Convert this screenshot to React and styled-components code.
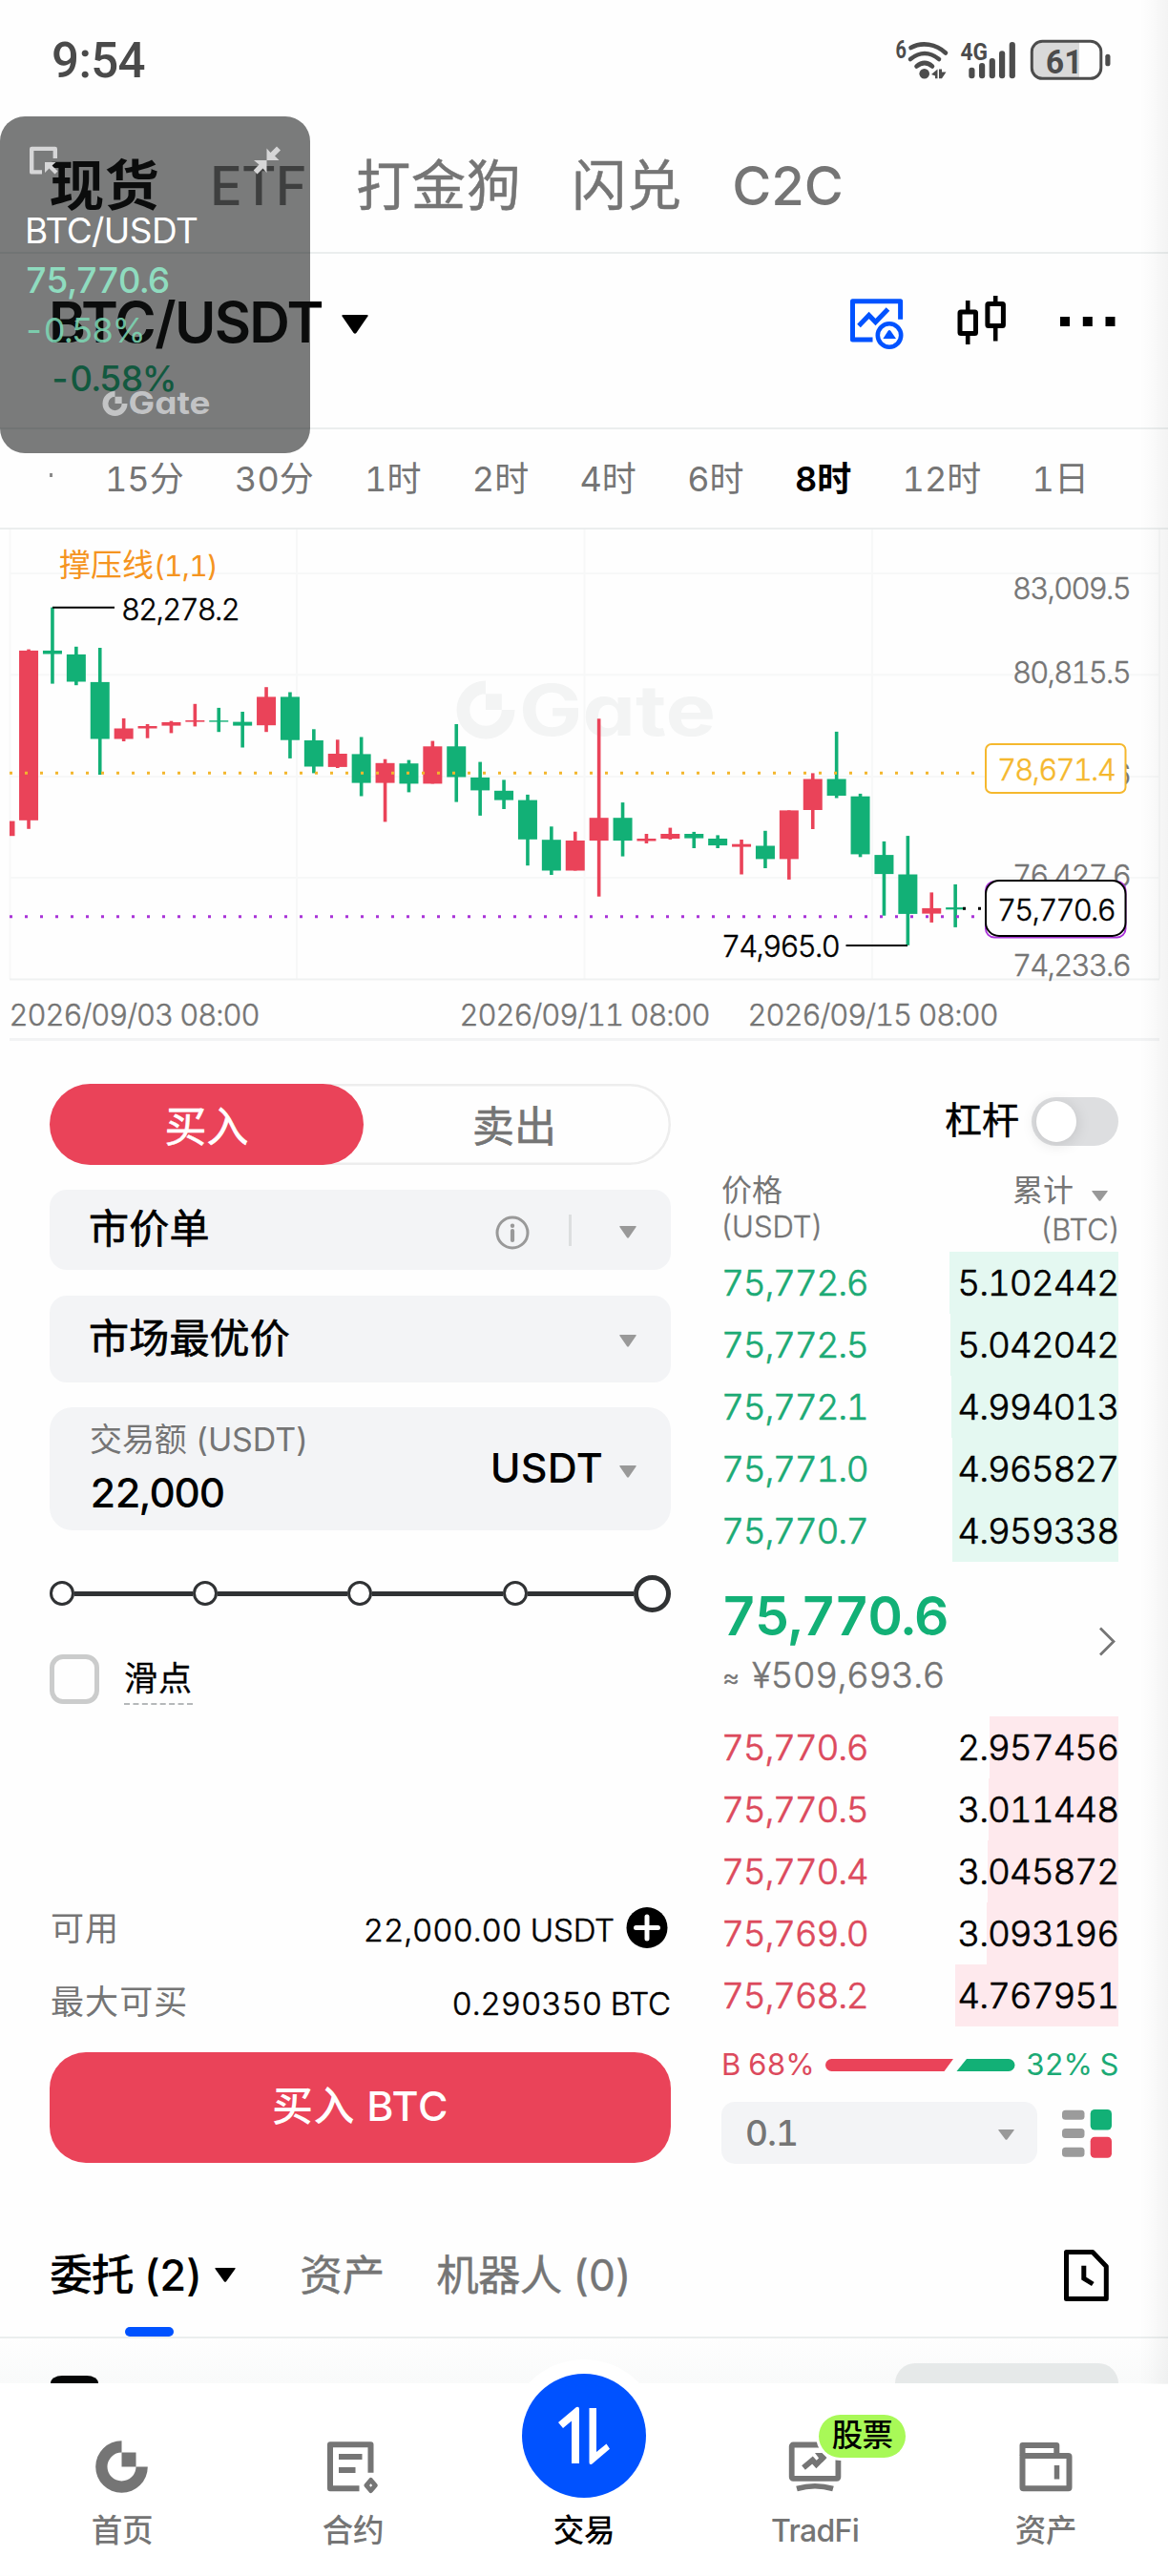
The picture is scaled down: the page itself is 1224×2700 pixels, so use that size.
import React from "react";
import styled, { createGlobalStyle } from "styled-components";

const RED = "#ea4359";
const GREEN = "#12b076";
const GRAY = "#757575";
const BLUE = "#0052ff";
const FIELD = "#f3f4f6";
const FONT = 'Inter, "Noto Sans CJK SC", sans-serif';

const GlobalStyle = createGlobalStyle`
  *, *::before, *::after { box-sizing: border-box; }
  body {
    margin: 0;
    background: #fefefe;
    color: #000;
    font-family: ${FONT};
    font-variant-numeric: tabular-nums;
  }
  svg { display: block; flex: none; }
`;

const Screen = styled.div`
  position: relative;
  width: 1224px;
  height: 2700px;
  overflow: hidden;
  background: #fefefe;
  white-space: nowrap;
`;

const EdgeShade = styled.div`
  position: absolute;
  top: 0;
  right: 0;
  width: 30px;
  height: 2499px;
  background: linear-gradient(to right, rgba(0, 0, 0, 0), rgba(0, 0, 0, 0.014) 45%, rgba(0, 0, 0, 0.045));
  pointer-events: none;
`;

/* ---------- status bar ---------- */

const StatusBar = styled.header`
  display: flex;
  justify-content: space-between;
  height: 122px;
  padding: 34px 60px 0 54px;
`;

const Clock = styled.div`
  font: 500 51px/60px Roboto, sans-serif;
  letter-spacing: -0.6px;
  color: #4a4a4a;
`;

const StatusText = styled.text`
  font-family: Roboto, sans-serif;
  font-weight: 700;
  fill: #4c4c4c;
  stroke: none;
`;

const StatusIcons = () => (
  <svg width="226" height="60" viewBox="938 34 226 60" fill="none" stroke="#4c4c4c">
    <g fill="#4c4c4c" stroke="none">
      <circle cx="968.700" cy="77.300" r="5.300" />
      <path d="M976 78 L982.500 72.500 V82.300 H980 V79.500 Z M984 72.500 H987 V75.500 L991.500 75.500 L987 82.300 H984 Z" />
      <rect x="1015.300" y="70.700" width="6.200" height="11.600" rx="3" />
      <rect x="1026" y="66" width="6.200" height="16.300" rx="3" />
      <rect x="1036.700" y="61" width="6.200" height="21.300" rx="3" />
      <rect x="1047" y="53.300" width="6.200" height="29" rx="3" />
      <rect x="1057.700" y="44" width="6.200" height="38.300" rx="3" />
      <path d="M1092 44 H1131 V82 H1092 Q1081 82 1081 71 V55 Q1081 44 1092 44 Z" fill="#d9d9d9" />
      <rect x="1158.300" y="56.700" width="5.200" height="12.600" rx="2.600" />
    </g>
    <StatusText x="938.500" y="61" fontSize="25" textLength="11.500" lengthAdjust="spacingAndGlyphs">6</StatusText>
    <StatusText x="1006.500" y="63" fontSize="26.500" textLength="28.500" lengthAdjust="spacingAndGlyphs">4G</StatusText>
    <StatusText x="1096" y="76.800" fontSize="35.500" textLength="38.500" lengthAdjust="spacingAndGlyphs">61</StatusText>
    <g strokeWidth="4.600" strokeLinecap="round">
      <path d="M954.500 50 C966 43.500 981 46 991 55.500" />
      <path d="M954 62 Q969 50 984 62" />
      <path d="M960.500 69.500 Q969 62.500 977 69.500" />
    </g>
    <rect x="1081.300" y="43.300" width="72.500" height="39" rx="11" strokeWidth="3" />
  </svg>
);

/* ---------- category tabs ---------- */

const CategoryBar = styled.nav`
  display: flex;
  align-items: center;
  gap: 52.500px;
  height: 144px;
  padding: 4px 52px 0;
  border-bottom: 2px solid #ebeeee;
`;

const Category = styled.span`
  font-size: ${(p) => (p.$latin ? 56 : 57)}px;
  line-height: 80px;
  font-weight: ${(p) => (p.$active ? 600 : p.$latin ? 500 : 400)};
  letter-spacing: ${(p) => (p.$latin ? -0.9 : 0.8)}px;
  color: ${(p) => (p.$active ? "#000" : GRAY)};
  -webkit-text-stroke: ${(p) => (p.$active || p.$latin ? 0 : 0.5)}px currentColor;
`;

/* ---------- pair header ---------- */

const PairHeader = styled.section`
  display: flex;
  justify-content: space-between;
  height: 184px;
  padding: 41px 54px 0 51px;
  border-bottom: 2px solid #ebeeee;
`;

const PairName = styled.div`
  display: flex;
  align-items: center;
  gap: 20px;
  height: 60px;
  padding-top: 1px;
  font-size: 59px;
  line-height: 60px;
  font-weight: 600;
  letter-spacing: -1.65px;
`;

const PairChange = styled.div`
  margin: 5px 0 0 0;
  font-size: 37px;
  line-height: 50px;
  font-weight: 500;
  letter-spacing: -1.600px;
  color: ${GREEN};
`;

const CaretShape = styled.svg`
  margin-top: ${(p) => p.$drop || 0}px;
`;

const Caret = ({ w, h, color, drop }) => (
  <CaretShape width={w} height={h} viewBox="0 0 10 10" preserveAspectRatio="none" $drop={drop}>
    <path d="M0.400 0 H9.600 Q10 0 9.800 0.700 L5.500 9.500 Q5 10.200 4.500 9.500 L0.200 0.700 Q0 0 0.400 0 Z" fill={color} />
  </CaretShape>
);

const PairActionIcons = () => (
  <svg width="280" height="60" viewBox="890 308 280 60" fill="none">
    <g stroke={BLUE} strokeWidth="5">
      <path d="M943.600 335.700 V316.800 H893.500 V357.100 H914.500" strokeLinejoin="round" />
      <path d="M900 342.500 L910.600 331.400 L917.500 338.600 L930.500 325" />
      <circle cx="932" cy="352.500" r="12.200" strokeWidth="4.600" />
      <path d="M925.400 356 L930.500 348 Q932 346 933.500 348 L939 356 Z" fill={BLUE} stroke="none" />
    </g>
    <g stroke="#000" strokeWidth="5">
      <rect x="1006" y="328" width="16.500" height="22.500" rx="1" />
      <path d="M1014.200 316 V328 M1014.200 350.500 V362" strokeWidth="4.600" />
      <rect x="1034.900" y="319.500" width="16.500" height="23" rx="1" />
      <path d="M1043.200 311 V319.500 M1043.200 342.500 V358.500" strokeWidth="4.600" />
    </g>
    <path d="M1111 333 h10 v10 h-10 Z M1134.800 333 h10 v10 h-10 Z M1158.500 333 h10 v10 h-10 Z" fill="#000" />
  </svg>
);

/* ---------- periods ---------- */

const PeriodBar = styled.nav`
  display: flex;
  align-items: center;
  height: 105px;
  padding: 0 83px 0 52px;
  border-bottom: 2px solid #ebeeee;
`;

const PeriodClip = styled.i`
  width: 3px;
  height: 4px;
  margin-top: -8px;
  background: #8a8a8a;
`;

const PeriodList = styled.div`
  display: flex;
  flex: 1;
  justify-content: space-between;
  margin-left: 55px;
`;

const Period = styled.span`
  font-size: 36px;
  line-height: 60px;
  font-weight: ${(p) => (p.$active ? 600 : 400)};
  color: ${(p) => (p.$active ? "#000" : GRAY)};
`;

/* ---------- chart ---------- */

const GateMark = ({ cx, cy, r }) => {
  const i = r * 0.55;
  return (
    <path
      d={`M${cx} ${cy - r} A${r} ${r} 0 1 0 ${cx + r} ${cy} H${cx + i} A${i} ${i} 0 1 1 ${cx} ${cy - i} Z M${cx} ${cy - i} h${i} v${i} h${-i} Z`}
    />
  );
};

const Wordmark = styled.text`
  font-weight: 700;
  font-feature-settings: "cv11";
`;

const AxisText = styled.text`
  font-size: 31px;
  font-weight: 300;
  letter-spacing: ${(p) => p.$ls ?? -1.75}px;
  fill: ${(p) => p.$color || "#000"};
  stroke: ${(p) => p.$color || "#000"};
  stroke-width: 0.400px;
`;

/* direction, body top, body bottom, high, low */
const candles = [
  ["r", 682.9, 860.8, 681.6, 869.8], ["g", 682.9, 686.5, 637.6, 717.6], ["g", 686.9, 715.5, 678.8, 719.2],
  ["g", 715.9, 775.5, 680, 813], ["r", 764.5, 775.5, 753.9, 778], ["r", 762, 764.5, 760, 774.7],
  ["r", 758, 761.6, 756.7, 769.4], ["r", 756, 757.6, 738.8, 762.4], ["g", 756.2, 757.6, 742.9, 768.2],
  ["g", 757.6, 761.6, 747, 784.5], ["r", 731.4, 761.2, 721.2, 768.2], ["g", 731.4, 776.7, 726.5, 795.9],
  ["g", 777, 804.5, 765.3, 811.4], ["r", 791, 804.9, 776.3, 806], ["g", 791.4, 821.6, 773.5, 835.5],
  ["r", 800.8, 821.6, 796.7, 862.4], ["g", 801.2, 822.4, 797.6, 831.4], ["r", 783.3, 822.4, 777.6, 822.4],
  ["g", 783.3, 815.5, 760, 841.6], ["g", 815.9, 829.4, 799.6, 855.9], ["g", 829.8, 839.6, 818.4, 849],
  ["g", 839.6, 880.8, 833.9, 908.2], ["g", 881.2, 913.5, 867.3, 918], ["r", 882, 913.5, 872.7, 913.5],
  ["r", 858.2, 882.1, 754.3, 940.7], ["g", 858.2, 882.1, 842.1, 898.6], ["r", 880, 882.5, 875, 885],
  ["r", 875, 880, 868.6, 881], ["g", 875, 879.6, 872.9, 890], ["g", 880, 887.1, 876.4, 890],
  ["r", 885.7, 888.6, 881, 917.5], ["g", 887.5, 901.4, 871.8, 911], ["r", 850.4, 901.4, 850.4, 922.9],
  ["r", 817.5, 850, 811.4, 870], ["g", 817.5, 835, 767.9, 837.5], ["g", 835.7, 896.4, 832.9, 899.3],
  ["g", 897.1, 917.1, 882.9, 960.7], ["g", 917.5, 958.9, 877.1, 991.8], ["r", 952.9, 958.6, 936.4, 967.9],
  ["g", 952.1, 954.3, 927.9, 972.9],
];

const Chart = () => (
  <svg width="1224" height="536" viewBox="0 556 1224 536">
    <path
      d="M10.500 556 V1027 M311 556 V1027 M612.500 556 V1027 M914 556 V1027 M1215 556 V1027 M10 602 H1215 M10 708.300 H1215 M10 815 H1215 M10 921 H1215"
      stroke="#f7f8f8" strokeWidth="2"
    />
    <path d="M10 1027.500 H1215" stroke="#f0f1f1" strokeWidth="2" />
    <path d="M10 1090.500 H1215" stroke="#f2f3f4" strokeWidth="3" />
    <g fill="#f3f4f4">
      <GateMark cx={509} cy={745} r={30.5} />
      <Wordmark x="544" y="772" fontSize="74" textLength="206" lengthAdjust="spacingAndGlyphs">Gate</Wordmark>
    </g>
    <rect x="10" y="861.600" width="5.500" height="15.600" fill={RED} />
    {candles.map(([dir, top, bottom, high, low], i) => {
      const cx = 30.05 + 24.9 * i;
      return (
        <g key={i} fill={dir === "r" ? RED : GREEN}>
          <rect x={cx - 1.8} y={high} width="3.600" height={low - high} />
          <rect x={cx - 10} y={top} width="20" height={bottom - top} />
        </g>
      );
    })}
    <path d="M10 811.300 H1022" stroke="#f3b62c" strokeWidth="3" strokeDasharray="3 13" />
    <path d="M10 961.700 H1022" stroke="#a933d8" strokeWidth="3" strokeDasharray="3 13" />
    <path d="M1009 953.200 H1030" stroke="#000" strokeWidth="3" strokeDasharray="3 13" />
    <path d="M55 637.800 H120 M886.500 992 H951" stroke="#000" strokeWidth="2" />
    <text x="62" y="604.500" fontSize="33" fill="#f59420">
      撑压线<tspan fontSize="30" letterSpacing="-0.7">(1,1)</tspan>
    </text>
    <AxisText x="127" y="650.500">82,278.2</AxisText>
    <AxisText x="756" y="1003.500">74,965.0</AxisText>
    <AxisText $color={GRAY} x="1061" y="629">83,009.5</AxisText>
    <AxisText $color={GRAY} x="1061" y="717">80,815.5</AxisText>
    <AxisText $color={GRAY} x="1061" y="824">78,621.6</AxisText>
    <AxisText $color={GRAY} x="1061" y="930">76,427.6</AxisText>
    <AxisText $color={GRAY} x="1061" y="1023.500">74,233.6</AxisText>
    <AxisText $color={GRAY} $ls={-1.05} x="9.500" y="1075.500">2026/09/03 08:00</AxisText>
    <AxisText $color={GRAY} $ls={-1.05} x="481.500" y="1075.500">2026/09/11 08:00</AxisText>
    <AxisText $color={GRAY} $ls={-1.05} x="783.500" y="1075.500">2026/09/15 08:00</AxisText>
    <rect x="1033" y="781" width="146.500" height="51" rx="6" fill="#fff" stroke="#f5b82e" strokeWidth="2" />
    <AxisText $color="#f5b82e" x="1045" y="818.500">78,671.4</AxisText>
    <rect x="1033" y="925" width="146.500" height="58.500" rx="9" fill="#fff" stroke="#a933d8" strokeWidth="2" />
    <rect x="1033" y="924" width="146.500" height="58" rx="14" fill="#fff" stroke="#000" strokeWidth="2" />
    <AxisText x="1045" y="966">75,770.6</AxisText>
  </svg>
);

/* ---------- order form ---------- */

const TradeArea = styled.main`
  display: flex;
  justify-content: space-between;
  height: 1177px;
  padding: 0 52px;
`;

const OrderForm = styled.section`
  display: flex;
  flex-direction: column;
  width: 651px;
  padding-top: 45px;
`;

const SideSwitch = styled.div`
  display: flex;
  height: 85px;
  border-radius: 43px;
  box-shadow: inset 0 0 0 2.500px #ededed;
`;

const Side = styled.button`
  width: ${(p) => (p.$active ? 329 : 322)}px;
  padding: 4px ${(p) => (p.$active ? 0 : 6)}px 0 0;
  border: 0;
  border-radius: 43px;
  background: ${(p) => (p.$active ? RED : "transparent")};
  color: ${(p) => (p.$active ? "#fff" : GRAY)};
  font: 400 44px/80px ${FONT};
  -webkit-text-stroke: 0.600px currentColor;
`;

const Field = styled.div`
  display: flex;
  align-items: center;
  height: ${(p) => p.$h}px;
  margin-top: ${(p) => p.$mt}px;
  padding: 0 36px 0 41px;
  border-radius: ${(p) => p.$r || 18}px;
  background: ${FIELD};
`;

const FieldValue = styled.span`
  flex: 1;
  padding-bottom: 2px;
  font-size: 42px;
  line-height: 60px;
  letter-spacing: 0.2px;
  -webkit-text-stroke: 0.700px currentColor;
`;

const FieldDivider = styled.i`
  width: 3px;
  height: 33px;
  margin: 0 50px 0 41px;
  background: #dcdedf;
`;

const AmountStack = styled.div`
  display: flex;
  flex: 1;
  flex-direction: column;
  height: 129px;
  padding: 6px 0 0 1px;
`;

const AmountLabel = styled.span`
  font-size: 34px;
  line-height: 55px;
  letter-spacing: -0.1px;
  color: ${GRAY};
`;

const AmountValue = styled.span`
  font-size: 43px;
  line-height: 56px;
  font-weight: 500;
  letter-spacing: -1.7px;
`;

const AmountUnit = styled.span`
  margin-right: 17px;
  padding-bottom: 3px;
  font-size: 43px;
  line-height: 60px;
  font-weight: 500;
  letter-spacing: 0.2px;
`;

const InfoShape = styled.svg`
  margin-top: 5px;
`;

const InfoIcon = () => (
  <InfoShape width="36" height="36" viewBox="0 0 36 36" fill="none" stroke="#999" strokeWidth="3">
    <circle cx="18" cy="18" r="16" />
    <path d="M18 16 V26" strokeWidth="4.200" strokeLinecap="round" />
    <circle cx="18" cy="10.800" r="2.200" fill="#999" stroke="none" />
  </InfoShape>
);

const Slider = styled.div`
  display: flex;
  align-items: center;
  height: 40px;
  margin-top: 46px;
`;

const SliderStop = styled.i`
  width: ${(p) => (p.$thumb ? 39 : 26)}px;
  height: ${(p) => (p.$thumb ? 39 : 26)}px;
  border: ${(p) => (p.$thumb ? 5 : 3)}px solid #303234;
  border-radius: 50%;
  background: #fff;
`;

const SliderTrack = styled.i`
  flex: ${(p) => p.$grow};
  height: 5px;
  background: #303234;
`;

const SlippageRow = styled.label`
  display: flex;
  align-items: center;
  gap: 26px;
  height: 52px;
  margin-top: 44px;
`;

const CheckBox = styled.i`
  width: 52px;
  height: 52px;
  border: 5px solid #cbcccc;
  border-radius: 14px;
`;

const SlippageText = styled.span`
  height: 54px;
  border-bottom: 2px dashed #b5b8ba;
  font-size: 35px;
  line-height: 52px;
  letter-spacing: 1px;
  -webkit-text-stroke: 0.300px currentColor;
`;

const InfoRow = styled.div`
  display: flex;
  align-items: center;
  justify-content: space-between;
  height: 44px;
  margin-top: ${(p) => p.$mt}px;
  color: ${GRAY};
`;

const InfoLabel = styled.span`
  padding: 0 0 4px 1px;
  font-size: 35px;
  line-height: 44px;
  letter-spacing: 1.100px;
`;

const InfoValue = styled.span`
  display: flex;
  align-items: center;
  gap: 12px;
  padding-right: ${(p) => (p.$plus ? 3 : 0)}px;
  font-size: 33px;
  font-weight: 300;
  letter-spacing: -0.100px;
  color: #000;
  -webkit-text-stroke: 0.500px currentColor;
`;

const PlusIcon = () => (
  <svg width="44" height="50" viewBox="0 0 44 50">
    <circle cx="22" cy="22.500" r="21.500" fill="#000" />
    <path d="M22 11 V34 M10.500 22.500 H33.500" stroke="#fff" strokeWidth="5" strokeLinecap="round" />
  </svg>
);

const BuyButton = styled.button`
  height: 116px;
  margin-top: 29px;
  padding: 0 0 5px;
  border: 0;
  border-radius: 38px;
  background: ${RED};
  color: #fff;
  font: 500 43px/80px ${FONT};
  letter-spacing: 0.6px;
`;

/* ---------- order book ---------- */

const OrderBook = styled.section`
  display: flex;
  flex-direction: column;
  width: 416px;
  padding-top: 59px;
`;

const LeverageRow = styled.div`
  display: flex;
  align-items: center;
  justify-content: flex-end;
  gap: 13px;
  height: 51px;
`;

const LeverageLabel = styled.span`
  padding-bottom: 4px;
  font-size: 39px;
  line-height: 44px;
  -webkit-text-stroke: 0.500px currentColor;
`;

const Toggle = styled.div`
  display: flex;
  align-items: center;
  width: 91px;
  height: 51px;
  padding: 0 5px;
  border-radius: 26px;
  background: #dddee0;
`;

const Knob = styled.i`
  width: 42px;
  height: 43px;
  border-radius: 50%;
  background: #fff;
  box-shadow: 0 2px 16px rgba(0, 0, 0, 0.13);
`;

const BookHead = styled.div`
  display: flex;
  justify-content: space-between;
  height: 83px;
  margin-top: 28px;
  padding-top: 1px;
  color: ${GRAY};
`;

const HeadColumn = styled.div`
  display: flex;
  flex-direction: column;
  align-items: ${(p) => (p.$end ? "flex-end" : "flex-start")};
`;

const HeadTitle = styled.span`
  display: flex;
  align-items: center;
  gap: 19px;
  height: 36px;
  padding-right: ${(p) => p.$pr || 0}px;
  font-size: 32px;
  line-height: 36px;
`;

const HeadUnit = styled.span`
  margin: 0 -2px 0 -1px;
  font-size: 31px;
  font-weight: 300;
  line-height: ${(p) => (p.$end ? 45 : 39)}px;
  -webkit-text-stroke: 0.400px currentColor;
`;

const BookRow = styled.div`
  display: flex;
  justify-content: space-between;
  height: 65px;
  font-size: 37px;
  line-height: 65px;
  font-weight: 300;
  -webkit-text-stroke: 0.600px currentColor;
  background: linear-gradient(${(p) => p.$tint}, ${(p) => p.$tint}) right / ${(p) => p.$depth}px 100% no-repeat;
`;

const BookPrice = styled.span`
  letter-spacing: -1.25px;
  color: ${(p) => p.$color};
  -webkit-text-stroke-color: ${(p) => p.$color};
`;

const BookTotal = styled.span`
  letter-spacing: -1.1px;
`;

const LastPrice = styled.div`
  display: flex;
  justify-content: space-between;
  height: 162px;
  padding: 25px 3px 0 0;
`;

const LastValue = styled.div`
  font-size: 57px;
  line-height: 64px;
  font-weight: 600;
  letter-spacing: -1.9px;
  color: ${GREEN};
`;

const LastFiat = styled.div`
  display: flex;
  font-size: 37px;
  line-height: 60px;
  font-weight: 300;
  letter-spacing: -0.55px;
  color: ${GRAY};
  -webkit-text-stroke: 0.500px currentColor;
`;

const Approx = styled.span`
  width: 32px;
  padding: 2px 0 0 1px;
  font-size: 28px;
`;

const Chevron = styled.svg`
  margin-top: 43px;
`;

const RatioRow = styled.div`
  display: flex;
  align-items: center;
  justify-content: space-between;
  height: 44px;
  margin-top: 18px;
  font-size: 31px;
  line-height: 44px;
`;

const RatioText = styled.span`
  letter-spacing: -0.4px;
  color: ${(p) => p.$color};
`;

const BookFooter = styled.div`
  display: flex;
  align-items: center;
  justify-content: space-between;
  height: 65px;
  margin-top: 17px;
  padding-right: 6px;
`;

const StepSelect = styled.div`
  display: flex;
  align-items: center;
  justify-content: space-between;
  width: 331px;
  height: 65px;
  padding: 0 24px 0 25px;
  border-radius: 14px;
  background: ${FIELD};
  color: ${GRAY};
  font-size: 37px;
  line-height: 65px;
  font-weight: 500;
  letter-spacing: -1px;
`;

const DepthIcon = () => (
  <svg width="54" height="52" viewBox="1112 2210 54 52">
    <g fill="#9b9b9b">
      <rect x="1113" y="2211.700" width="23.500" height="10" rx="3.500" />
      <rect x="1113" y="2231" width="23.500" height="10" rx="3.500" />
      <rect x="1113" y="2250.700" width="23.500" height="10" rx="3.500" />
    </g>
    <rect x="1142.700" y="2211" width="22.300" height="21.500" rx="4.500" fill={GREEN} />
    <rect x="1142.700" y="2239.700" width="22.300" height="22" rx="4.500" fill={RED} />
  </svg>
);

const asks = [
  ["75,772.6", "5.102442", 177], ["75,772.5", "5.042042", 176], ["75,772.1", "4.994013", 175],
  ["75,771.0", "4.965827", 174.5], ["75,770.7", "4.959338", 174],
];
const bids = [
  ["75,770.6", "2.957456", 135], ["75,770.5", "3.011448", 136], ["75,770.4", "3.045872", 137],
  ["75,769.0", "3.093196", 138], ["75,768.2", "4.767951", 171],
];

/* ---------- bottom tabs and list ---------- */

const OrdersBar = styled.nav`
  display: flex;
  align-items: center;
  height: 183px;
  padding: 52px 62px 0 52px;
  border-bottom: 2px solid #ebeeee;
`;

const OrdersTab = styled.span`
  position: relative;
  display: flex;
  align-items: center;
  gap: 14px;
  margin-right: ${(p) => p.$mr || 0}px;
  font-size: ${(p) => (p.$active ? 45 : 44.500)}px;
  line-height: 126px;
  font-weight: ${(p) => (p.$active ? 500 : 400)};
  letter-spacing: ${(p) => p.$ls || 0}px;
  color: ${(p) => (p.$active ? "#000" : GRAY)};
  -webkit-text-stroke: ${(p) => (p.$active ? 0 : 0.400)}px currentColor;
  &::after {
    content: "";
    display: ${(p) => (p.$active ? "block" : "none")};
    position: absolute;
    left: 79px;
    bottom: -1px;
    width: 51px;
    height: 10px;
    border-radius: 5px;
    background: ${BLUE};
  }
`;

const TabSpacer = styled.i`
  flex: 1;
`;

const OrderPeek = styled.section`
  display: flex;
  align-items: flex-end;
  justify-content: space-between;
  height: 47px;
  padding: 0 52px 0 53px;
  background: linear-gradient(#fefefe, #f9fafa);
`;

const PeekBadge = styled.i`
  width: 50px;
  height: 8px;
  border-radius: 12px 12px 0 0 / 8px 8px 0 0;
  background: #050606;
`;

const PeekButton = styled.i`
  width: 234px;
  height: 21px;
  border-radius: 21px 21px 0 0;
  background: #e6e9e9;
`;

const NavBar = styled.nav`
  position: relative;
  display: grid;
  grid-template-columns: repeat(5, 242px);
  height: 201px;
  padding: 0 7px;
  background: #fff;
`;

const NavItem = styled.a`
  position: relative;
  display: flex;
  flex-direction: column;
  align-items: center;
  padding-top: ${(p) => (p.$main ? 0 : 58)}px;
  font-size: ${(p) => (p.$latin ? 32 : 32.500)}px;
  line-height: 50px;
  font-weight: 500;
  letter-spacing: ${(p) => (p.$latin ? -0.7 : -0.3)}px;
  color: ${(p) => (p.$main ? "#000" : GRAY)};
`;

const NavLabel = styled.span`
  margin-top: ${(p) => p.$mt ?? 12}px;
`;

const TradeButton = styled.div`
  display: flex;
  align-items: center;
  justify-content: center;
  width: 130px;
  height: 130px;
  margin-top: -10px;
  border-radius: 50%;
  background: ${BLUE};
  box-shadow: 0 0 0 15px #fff;
`;

const NavBadge = styled.span`
  position: absolute;
  left: 125px;
  top: 33px;
  width: 91px;
  height: 45px;
  border-radius: 23px;
  background: #a8f957;
  box-shadow: 0 0 0 3px #fff;
  color: #000;
  font-size: 32.500px;
  line-height: 43px;
  text-align: center;
`;

/* ---------- floating quote window ---------- */

const FloatWindow = styled.aside`
  position: absolute;
  left: 0;
  top: 122px;
  width: 325px;
  height: 353px;
  border-radius: 26px;
  background: rgba(19, 21, 22, 0.565);
`;

const FloatLine = styled.div`
  padding-left: ${(p) => p.$pl}px;
  font-size: ${(p) => p.$size}px;
  line-height: 52px;
  font-weight: ${(p) => p.$weight};
  letter-spacing: ${(p) => p.$ls}px;
  color: ${(p) => p.$color};
`;

const FloatControls = () => (
  <svg width="325" height="94" viewBox="0 122 325 94" fill="#d6d6d7">
    <path d="M57.800 166 V155.900 H33.200 V180.400 H44" fill="none" stroke="#d6d6d7" strokeWidth="4.400" strokeLinejoin="round" />
    <path d="M47 170 H58.500 L54.500 173.500 L60.500 179.500 L57.500 182.500 L51.500 176.500 L47 181 Z" />
    <path d="M279.500 155.500 L283.500 160 L290 153.500 L294 157.500 L288 163.500 L292.500 168 H279.500 Z" />
    <path d="M279.500 168 V181 L275.500 176.500 L269.500 182.500 L265.700 178.500 L271.500 172.500 L266 168 Z" />
  </svg>
);

const FloatBrand = () => (
  <svg width="325" height="80" viewBox="0 372 325 80" fill="rgba(215,216,218,0.78)">
    <GateMark cx={120.500} cy={423} r={13} />
    <Wordmark x="134.500" y="434" fontSize="33" textLength="86" lengthAdjust="spacingAndGlyphs">Gate</Wordmark>
  </svg>
);

export default function App() {
  return (
    <Screen>
      <GlobalStyle />
      <StatusBar>
        <Clock>9:54</Clock>
        <StatusIcons />
      </StatusBar>

      <CategoryBar>
        <Category $active>现货</Category>
        <Category $latin>ETF</Category>
        <Category>打金狗</Category>
        <Category>闪兑</Category>
        <Category $latin>C2C</Category>
      </CategoryBar>

      <PairHeader>
        <div>
          <PairName>
            BTC/USDT
            <Caret w={28} h={20} color="#000" drop={5} />
          </PairName>
          <PairChange>-0.58%</PairChange>
        </div>
        <PairActionIcons />
      </PairHeader>

      <PeriodBar>
        <PeriodClip />
        <PeriodList>
          {["15分", "30分", "1时", "2时", "4时", "6时", "8时", "12时", "1日"].map((p) => (
            <Period key={p} $active={p === "8时"}>{p}</Period>
          ))}
        </PeriodList>
      </PeriodBar>

      <Chart />

      <TradeArea>
        <OrderForm>
          <SideSwitch>
            <Side $active>买入</Side>
            <Side>卖出</Side>
          </SideSwitch>
          <Field $h={84} $mt={26}>
            <FieldValue>市价单</FieldValue>
            <InfoIcon />
            <FieldDivider />
            <Caret w={18} h={13} color="#999" drop={5} />
          </Field>
          <Field $h={91} $mt={27}>
            <FieldValue>市场最优价</FieldValue>
            <Caret w={18} h={13} color="#999" drop={3} />
          </Field>
          <Field $h={129} $mt={26} $r={24}>
            <AmountStack>
              <AmountLabel>交易额 (USDT)</AmountLabel>
              <AmountValue>22,000</AmountValue>
            </AmountStack>
            <AmountUnit>USDT</AmountUnit>
            <Caret w={18} h={13} color="#999" drop={5} />
          </Field>
          <Slider>
            <SliderStop />
            <SliderTrack $grow={125} />
            <SliderStop />
            <SliderTrack $grow={138} />
            <SliderStop />
            <SliderTrack $grow={138} />
            <SliderStop />
            <SliderTrack $grow={112} />
            <SliderStop $thumb />
          </Slider>
          <SlippageRow>
            <CheckBox />
            <SlippageText>滑点</SlippageText>
          </SlippageRow>
          <InfoRow $mt={215}>
            <InfoLabel>可用</InfoLabel>
            <InfoValue $plus>
              22,000.00 USDT
              <PlusIcon />
            </InfoValue>
          </InfoRow>
          <InfoRow $mt={33}>
            <InfoLabel>最大可买</InfoLabel>
            <InfoValue>0.290350 BTC</InfoValue>
          </InfoRow>
          <BuyButton>买入 BTC</BuyButton>
        </OrderForm>

        <OrderBook>
          <LeverageRow>
            <LeverageLabel>杠杆</LeverageLabel>
            <Toggle>
              <Knob />
            </Toggle>
          </LeverageRow>
          <BookHead>
            <HeadColumn>
              <HeadTitle>价格</HeadTitle>
              <HeadUnit>(USDT)</HeadUnit>
            </HeadColumn>
            <HeadColumn $end>
              <HeadTitle $pr={11}>
                累计
                <Caret w={17} h={11} color="#999" drop={11} />
              </HeadTitle>
              <HeadUnit $end>(BTC)</HeadUnit>
            </HeadColumn>
          </BookHead>
          {asks.map(([price, total, depth]) => (
            <BookRow key={price} $tint="#e4f8f1" $depth={depth}>
              <BookPrice $color="#1caa75">{price}</BookPrice>
              <BookTotal>{total}</BookTotal>
            </BookRow>
          ))}
          <LastPrice>
            <div>
              <LastValue>75,770.6</LastValue>
              <LastFiat>
                <Approx>≈</Approx>¥509,693.6
              </LastFiat>
            </div>
            <Chevron width="17" height="31" viewBox="0 0 17 31" fill="none" stroke={GRAY} strokeWidth="2.800">
              <path d="M1 1.500 L15 15.500 L1 29.500" />
            </Chevron>
          </LastPrice>
          {bids.map(([price, total, depth]) => (
            <BookRow key={price} $tint="#fee9ed" $depth={depth}>
              <BookPrice $color="#dc4a5d">{price}</BookPrice>
              <BookTotal>{total}</BookTotal>
            </BookRow>
          ))}
          <RatioRow>
            <RatioText $color="#dc4a5d">B 68%</RatioText>
            <svg width="199" height="13" viewBox="0 0 199 13">
              <path d="M6.500 0 H134 L124.500 13 H6.500 A6.500 6.500 0 0 1 6.500 0 Z" fill={RED} />
              <path d="M148 0 H192 A6.500 6.500 0 0 1 192 13 H137.500 Z" fill={GREEN} />
            </svg>
            <RatioText $color="#1caa75">32% S</RatioText>
          </RatioRow>
          <BookFooter>
            <StepSelect>
              0.1
              <Caret w={17} h={11} color="#999" drop={4} />
            </StepSelect>
            <DepthIcon />
          </BookFooter>
        </OrderBook>
      </TradeArea>

      <OrdersBar>
        <OrdersTab $active $ls={-1.2} $mr={67}>
          委托 (2)
          <Caret w={22} h={15} color="#000" />
        </OrdersTab>
        <OrdersTab $mr={54}>资产</OrdersTab>
        <OrdersTab $ls={-0.7}>机器人 (0)</OrdersTab>
        <TabSpacer />
        <svg width="47" height="54" viewBox="1115.500 2361 47 54" fill="none" stroke="#000" strokeWidth="5">
          <path d="M1118 2363.500 H1145.500 L1159.800 2378.500 V2412.500 H1118 Z" strokeLinejoin="round" />
          <path d="M1136.300 2377.700 V2391 L1145.800 2397" />
        </svg>
      </OrdersBar>

      <OrderPeek>
        <PeekBadge />
        <PeekButton />
      </OrderPeek>

      <NavBar>
        <NavItem>
          <svg width="60" height="60" viewBox="98 2557 60 60" fill={GRAY}>
            <GateMark cx={127.500} cy={2586.500} r={27.300} />
          </svg>
          <NavLabel>首页</NavLabel>
        </NavItem>
        <NavItem>
          <svg width="60" height="60" viewBox="341 2557 60 60" fill="none" stroke={GRAY} strokeWidth="6">
            <path d="M389.500 2592.700 V2563.300 H347 V2609.300 H377.500" strokeLinejoin="round" />
            <path d="M356 2576 H380.500 M356 2590 H373.500" />
            <path d="M389.600 2600.500 L394.300 2606 L389.600 2611.500 L384.900 2606 Z" strokeWidth="5" strokeLinejoin="round" />
          </svg>
          <NavLabel>合约</NavLabel>
        </NavItem>
        <NavItem $main>
          <TradeButton>
            <svg width="60" height="64" viewBox="582 2522 60 64" fill="#fff">
              <path d="M604 2524 Q607 2523 607 2526 V2583 H599 V2538.500 L590 2546 L585 2540 Z" />
              <path d="M617.500 2525 H625 V2571 L635.500 2562.500 L639 2567.700 L620.500 2583.500 Q617.500 2585 617.500 2582 Z" />
            </svg>
          </TradeButton>
          <NavLabel $mt={10}>交易</NavLabel>
        </NavItem>
        <NavItem $latin>
          <svg width="60" height="60" viewBox="823.500 2557 60 60" fill="none" stroke={GRAY} strokeWidth="5.800">
            <rect x="829.200" y="2563.500" width="48.700" height="35.300" rx="1.500" />
            <path d="M841.500 2587.500 L851 2579.500 L855 2584 L863 2576" />
            <path d="M853.500 2572 H861 L866 2577 L861 2582 Z" fill={GRAY} stroke="none" />
            <path d="M834.500 2609.500 Q853.500 2604 872.500 2609.500" strokeWidth="5.500" />
          </svg>
          <NavLabel>TradFi</NavLabel>
          <NavBadge>股票</NavBadge>
        </NavItem>
        <NavItem>
          <svg width="60" height="60" viewBox="1065.500 2557 60 60" fill="none" stroke={GRAY} strokeWidth="6">
            <path d="M1071 2575 V2564 H1106.800 V2575" strokeLinejoin="round" />
            <rect x="1071" y="2575" width="49" height="34.300" rx="1" strokeLinejoin="round" />
            <path d="M1107 2585 V2599.500" strokeWidth="5.500" />
          </svg>
          <NavLabel>资产</NavLabel>
        </NavItem>
      </NavBar>

      <FloatWindow>
        <FloatControls />
        <FloatLine $pl={26} $size={37} $weight={400} $ls={-0.6} $color="#fff">BTC/USDT</FloatLine>
        <FloatLine $pl={26} $size={37} $weight={500} $ls={-1.6} $color="#8fdcbf">75,770.6</FloatLine>
        <FloatLine $pl={24} $size={36} $weight={400} $ls={-1.9} $color="rgba(125,218,182,0.85)">-0.58%</FloatLine>
        <FloatBrand />
      </FloatWindow>
      <EdgeShade />
    </Screen>
  );
}
